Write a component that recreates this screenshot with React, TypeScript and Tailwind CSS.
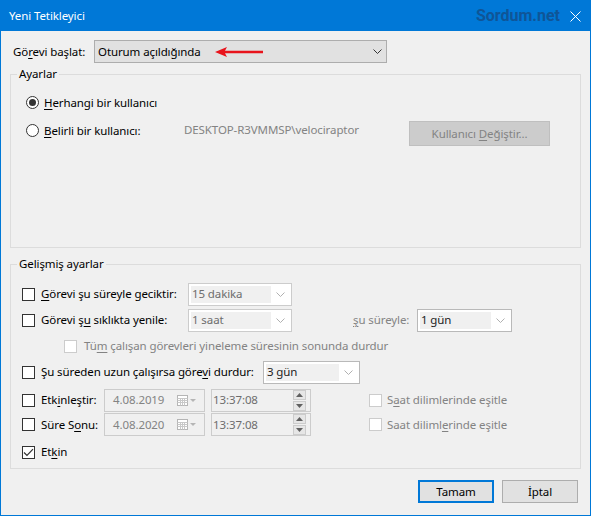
import React from 'react';

// Windows "Yeni Tetikleyici" dialog

const U = ({ children }: { children: React.ReactNode }) => (
  <span className="underline underline-offset-2 decoration-1">{children}</span>
);

const Check = ({ checked = false, disabled = false }: { checked?: boolean; disabled?: boolean }) => (
  <span
    className={
      disabled
        ? 'w-[13px] h-[13px] border border-[#cccccc] bg-white shrink-0 flex items-center justify-center'
        : 'w-[13px] h-[13px] border border-[#333333] bg-white shrink-0 flex items-center justify-center'
    }
  >
    {checked && (
      <svg width="11" height="9" viewBox="0 0 11 9">
        <path d="M1 4.5 L4 7.5 L10 1.2" stroke="#333333" strokeWidth="1.2" fill="none" />
      </svg>
    )}
  </span>
);

const Radio = ({ checked = false }: { checked?: boolean }) => (
  <span className="w-[13px] h-[13px] rounded-full border border-[#333333] bg-white shrink-0 flex items-center justify-center">
    {checked && <span className="w-[7px] h-[7px] rounded-full bg-[#333333]" />}
  </span>
);

const Chevron = ({ color }: { color: string }) => (
  <svg width="9" height="5" viewBox="0 0 9 5">
    <path d="M0.5 0.5 L4.5 4.5 L8.5 0.5" stroke={color} strokeWidth="1" fill="none" />
  </svg>
);

const Combo = ({ text, w, dark = false }: { text: string; w: string; dark?: boolean }) => (
  <div
    className={`${w} h-[23px] border ${dark ? 'border-[#b9b9b9]' : 'border-[#cccccc]'} bg-white flex items-stretch p-[2px] shrink-0`}
  >
    <div className={`flex-1 bg-[#f0f0f0] flex items-center pl-[1px] ${dark ? 'text-[#222222]' : 'text-[#6d6d6d]'}`}>
      {text}
    </div>
    <div className="w-[18px] flex items-center justify-center">
      <Chevron color="#b0b0b0" />
    </div>
  </div>
);

const CalIcon = () => (
  <svg width="20" height="11" viewBox="0 0 20 11">
    <rect x="0.5" y="0.5" width="10" height="10" fill="#ffffff" stroke="#b5b5b5" />
    <path d="M0.5 3.5 H10.5 M0.5 5.5 H10.5 M0.5 7.5 H10.5 M3.5 3 V10.5 M5.5 3 V10.5 M7.5 3 V10.5" stroke="#c8c8c8" strokeWidth="1" />
    <path d="M13 4 L19 4 L16 7 Z" fill="#b5b5b5" />
  </svg>
);

const Spin = () => (
  <div className="flex flex-col gap-[1px] mr-[4px]">
    <div className="w-[13px] h-[10px] bg-[#e6e6e6] border border-[#cccccc] flex items-center justify-center">
      <svg width="7" height="4" viewBox="0 0 7 4"><path d="M0 4 L3.5 0 L7 4 Z" fill="#606060" /></svg>
    </div>
    <div className="w-[13px] h-[10px] bg-[#e6e6e6] border border-[#cccccc] flex items-center justify-center">
      <svg width="7" height="4" viewBox="0 0 7 4"><path d="M0 0 L3.5 4 L7 0 Z" fill="#606060" /></svg>
    </div>
  </div>
);

const DateBox = ({ date }: { date: string }) => (
  <div className="w-[101px] h-[23px] border border-[#cccccc] bg-[#f0f0f0] flex items-center justify-between pl-[8px] pr-[7px] text-[#838383] shrink-0">
    <span>{date}</span>
    <CalIcon />
  </div>
);

const TimeBox = () => (
  <div className="w-[100px] h-[23px] border border-[#cccccc] bg-[#f0f0f0] flex items-center justify-between pl-[1px] text-[#6d6d6d] shrink-0">
    <span>13:37:08</span>
    <Spin />
  </div>
);

export default function App() {
  return (
    <div className="w-[591px] h-[516px] bg-[#f0f0f0] border border-[#0078d7] flex flex-col font-['Noto_Sans','Open_Sans',sans-serif] text-[11.5px] tracking-[-0.1px] leading-[16px] text-black whitespace-nowrap overflow-hidden">
      {/* Title bar */}
      <div className="h-[30px] shrink-0 bg-[#0078d7] flex items-center pl-[8px] pr-[9px]">
        <span className="text-white">Yeni Tetikleyici</span>
        <span className="ml-auto text-[#0f5597] font-bold text-[16px] tracking-[0px] font-['Roboto',sans-serif]">Sordum.net</span>
        <svg className="ml-[10px]" width="11" height="11" viewBox="0 0 11 11">
          <path d="M0.5 0.5 L10.5 10.5 M10.5 0.5 L0.5 10.5" stroke="#ffffff" strokeWidth="1" />
        </svg>
      </div>

      {/* Start task */}
      <div className="mt-[9px] h-[23px] flex items-center pl-[12px]">
        <span className="w-[81px]">
          Gö<U>r</U>evi başlat:
        </span>
        <div className="w-[293px] h-[23px] border border-[#adadad] bg-[#e1e1e1] flex items-center pl-[3px] pr-[4px]">
          <span>Oturum açıldığında</span>
          <svg className="ml-[14px]" width="48" height="10" viewBox="0 0 48 10">
            <path d="M0 5 L12 0 L10 3.8 L48 3.8 L48 6.2 L10 6.2 L12 10 Z" fill="#e8141c" />
          </svg>
          <span className="ml-auto">
            <Chevron color="#333333" />
          </span>
        </div>
      </div>

      {/* Ayarlar */}
      <fieldset className="mt-[3px] ml-[9px] w-[571px] h-[182px] border border-[#dcdcdc] shrink-0">
        <legend className="ml-[6px] px-[2px]">Ayarlar</legend>
        <div className="mt-[12px] pl-[15px] h-[17px] flex items-center gap-[5px]">
          <Radio checked />
          <span>
            <U>H</U>erhangi bir kullanıcı
          </span>
        </div>
        <div className="mt-[10px] pl-[15px] h-[25px] flex items-center">
          <div className="self-start mt-[1px] h-[17px] flex items-center gap-[5px]">
            <Radio />
            <span className="w-[140px]">
              <U>B</U>elirli bir kullanıcı:
            </span>
          </div>
          <span className="w-[225px] text-[#838383] self-start mt-[1px]">DESKTOP-R3VMMSP\velociraptor</span>
          <div className="w-[141px] h-[25px] bg-[#cccccc] border border-[#bfbfbf] text-[#838383] flex items-center justify-center">
            <span>
              Kullanıcı <U>D</U>eğiştir...
            </span>
          </div>
        </div>
      </fieldset>

      {/* Gelişmiş ayarlar */}
      <fieldset className="mt-[8px] ml-[9px] w-[571px] h-[213px] border border-[#dcdcdc] shrink-0">
        <legend className="ml-[6px] px-[2px]">Gelişmiş ayarlar</legend>
        <div className="mt-[9px] pl-[11px] flex flex-col">
          <div className="h-[26px] flex items-center">
            <Check />
            <span className="ml-[6px] w-[147px]">
              <U>G</U>örevi şu süreyle geciktir:
            </span>
            <Combo text="15 dakika" w="w-[104px]" />
          </div>
          <div className="h-[26px] flex items-center">
            <Check />
            <span className="ml-[6px] w-[147px]">
              Görevi ş<U>u</U> sıklıkta yenile:
            </span>
            <Combo text="1 saat" w="w-[104px]" />
            <span className="ml-[61px] w-[64px] text-[#838383]">
              <U>ş</U>u süreyle:
            </span>
            <Combo text="1 gün" w="w-[95px]" dark />
          </div>
          <div className="h-[26px] flex items-center pl-[42px]">
            <Check disabled />
            <span className="ml-[7px] text-[#838383]">
              Tü<U>m</U> çalışan görevleri yineleme süresinin sonunda durdur
            </span>
          </div>
          <div className="h-[26px] flex items-center">
            <Check />
            <span className="ml-[6px] w-[222px]">
              Şu süreden uzun çalışırsa göre<U>v</U>i durdur:
            </span>
            <Combo text="3 gün" w="w-[97px]" dark />
          </div>
          <div className="mt-[3px] h-[24px] flex items-center">
            <Check />
            <span className="ml-[6px] w-[63px]">
              Etk<U>i</U>nleştir:
            </span>
            <DateBox date="4.08.2019" />
            <span className="w-[6px]" />
            <TimeBox />
            <span className="ml-[58px]">
              <Check disabled />
            </span>
            <span className="ml-[5px] text-[#838383]">
              S<U>a</U>at dilimlerinde eşitle
            </span>
          </div>
          <div className="h-[25px] flex items-center">
            <Check />
            <span className="ml-[6px] w-[63px]">
              Süre S<U>o</U>nu:
            </span>
            <DateBox date="4.08.2020" />
            <span className="w-[6px]" />
            <TimeBox />
            <span className="ml-[58px]">
              <Check disabled />
            </span>
            <span className="ml-[5px] text-[#838383]">
              Saat diliml<U>e</U>rinde eşitle
            </span>
          </div>
          <div className="h-[30px] flex items-center">
            <Check checked />
            <span className="ml-[6px]">
              Et<U>k</U>in
            </span>
          </div>
        </div>
      </fieldset>

      {/* Buttons */}
      <div className="mt-[11px] flex justify-end gap-[8px] pr-[12px]">
        <button className="w-[76px] h-[23px] bg-[#e1e1e1] border-2 border-[#0078d7] flex items-center justify-center">
          Tamam
        </button>
        <button className="w-[76px] h-[23px] bg-[#e1e1e1] border border-[#adadad] flex items-center justify-center">
          İptal
        </button>
      </div>
    </div>
  );
}
